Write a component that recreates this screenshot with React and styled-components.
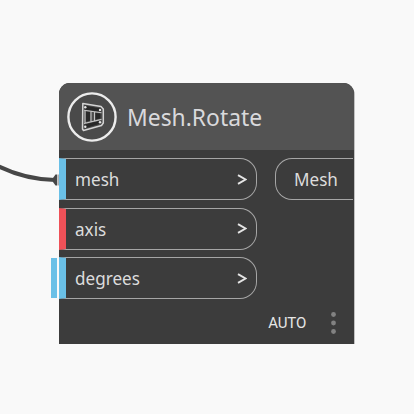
import styled, { createGlobalStyle } from "styled-components";

const GlobalStyle = createGlobalStyle`
  * {
    box-sizing: border-box;
  }
  body {
    margin: 0;
    background: #f9f9f9;
    font-family: "Noto Sans", sans-serif;
  }
`;

const Canvas = styled.main`
  position: relative;
  width: 414px;
  height: 414px;
  overflow: hidden;
`;

// the wire and the node float on the graph canvas
const Wire = styled.svg`
  position: absolute;
  left: 0;
  top: 155px;
`;

const Node = styled.section`
  position: absolute;
  left: 59px;
  top: 83px;
  width: 295px;
  height: 261px;
  display: flex;
  flex-direction: column;
  background: #3c3c3c;
  border-radius: 11px 11px 0 0;
  box-shadow: 0.5px 0 0 #8c8c8c;
`;

const Header = styled.header`
  display: flex;
  align-items: center;
  gap: 9.5px;
  height: 67px;
  padding-left: 8px;
  background: #535353;
  border-radius: 11px 11px 0 0;
`;

const Title = styled.h1`
  margin: 1px 0 0;
  font-size: 24px;
  line-height: 32px;
  font-weight: 400;
  color: #d9d9dc;
  transform: scaleX(0.953);
  transform-origin: left;
`;

const Ports = styled.div`
  display: flex;
  justify-content: space-between;
  align-items: flex-start;
  padding: 8px 1px 0 0;
`;

const Inputs = styled.div`
  display: flex;
  flex-direction: column;
  gap: 7.5px;
`;

const Label = styled.span`
  transform: scaleX(0.95);
  transform-origin: left;
`;

const Input = styled.div`
  position: relative;
  display: flex;
  align-items: center;
  justify-content: space-between;
  width: 198px;
  height: 42px;
  padding: 0 9px 0 9px;
  border: 1px solid #a6a6a6;
  border-left: 7px solid ${({ $color }) => $color};
  border-radius: 0 17px 17px 0;
  font-size: 18px;
  color: #dcdcdc;
`;

const DefaultMark = styled.span`
  position: absolute;
  left: -15px;
  top: 0;
  width: 6px;
  height: 40px;
  background: #6ac0e7;
`;

const Chevron = styled.svg`
  display: block;
`;

const Output = styled.div`
  display: flex;
  align-items: center;
  width: 78px;
  height: 42px;
  padding-left: 18px;
  border: 1px solid #a6a6a6;
  border-right: 0;
  border-radius: 17px 0 0 17px;
  font-size: 18px;
  color: #dcdcdc;
`;

const Footer = styled.footer`
  display: flex;
  align-items: center;
  justify-content: flex-end;
  gap: 24px;
  margin-top: auto;
  height: 42px;
  padding-right: 18px;
  font-family: Roboto, sans-serif;
  font-size: 15px;
  letter-spacing: -0.2px;
  color: #e6e6e6;
`;

const inputs = [
  { name: "mesh", color: "#6ac0e7" },
  { name: "axis", color: "#ee5158" },
  { name: "degrees", color: "#6ac0e7", hasDefault: true },
];

const MeshIcon = () => (
  <svg width="50" height="50" viewBox="0 0 50 50" fill="none">
    <circle cx="25" cy="25" r="23.6" fill="#4a4a4a" stroke="#ececec" strokeWidth="2.4" />
    <path d="M15.800 11.500 L34 14.500 L36.300 17 V31 L34.500 33.500 L16.500 38.500 L15.500 37 Z" fill="#4c4c4c" stroke="#d4d4d4" strokeWidth="1.500" strokeLinejoin="round" />
    <path d="M17.500 13.500 L34 16.500 V20 L17.500 17.500 Z M17.500 32.500 L34 28.300 V31.500 L17.500 36.500 Z" fill="#282828" />
    <path d="M19 19.500 L23 20 V28.800 L19 29.800 Z M28.500 21 L33.500 21.500 V26.500 L28.500 27.500 Z" fill="#282828" />
    <path d="M17 18.300 L34.500 20.800 M17 31.500 L34.500 27.400 M18 18.500 V31 M24 19.500 V29.500 M27.500 20 V28.500" stroke="#c4c4c4" strokeWidth="1.100" />
    <g fill="#e4e4e4">
      <circle cx="18.300" cy="15.200" r="1.200" />
      <circle cx="33" cy="18" r="1.200" />
      <circle cx="18.300" cy="34.700" r="1.200" />
      <circle cx="33" cy="30.200" r="1.200" />
    </g>
  </svg>
);

const Projects = () => {
  return (
    <>
      <GlobalStyle />
      <Canvas>
        <Wire width="60" height="40" viewBox="0 0 60 40" fill="none">
          <path d="M-2 11 C14 19 34 24.500 55 25" stroke="#474747" strokeWidth="4" />
          <path d="M53 23 L55.500 19.500 H57.300 V30.500 H55.500 L53 27 Z" fill="#474747" />
          <path d="M58.500 19.500 V30.500" stroke="#b0b0b0" />
        </Wire>
        <Node>
          <Header>
            <MeshIcon />
            <Title>Mesh.Rotate</Title>
          </Header>
          <Ports>
            <Inputs>
              {inputs.map((input) => (
                <Input key={input.name} $color={input.color}>
                  {input.hasDefault && <DefaultMark />}
                  <Label>{input.name}</Label>
                  <Chevron width="10" height="11" viewBox="0 0 10 11" fill="none">
                    <path d="M1 1.200 L8.600 5.500 L1 9.800" stroke="#e4e4e4" strokeWidth="2" />
                  </Chevron>
                </Input>
              ))}
            </Inputs>
            <Output>
              <Label>Mesh</Label>
            </Output>
          </Ports>
          <Footer>
            <span>AUTO</span>
            <svg width="6" height="24" viewBox="0 0 6 24" fill="#828282">
              <circle cx="3.500" cy="3.500" r="2.400" />
              <circle cx="3.500" cy="12" r="2.400" />
              <circle cx="3.500" cy="20.500" r="2.400" />
            </svg>
          </Footer>
        </Node>
      </Canvas>
    </>
  );
};

export default Projects;
